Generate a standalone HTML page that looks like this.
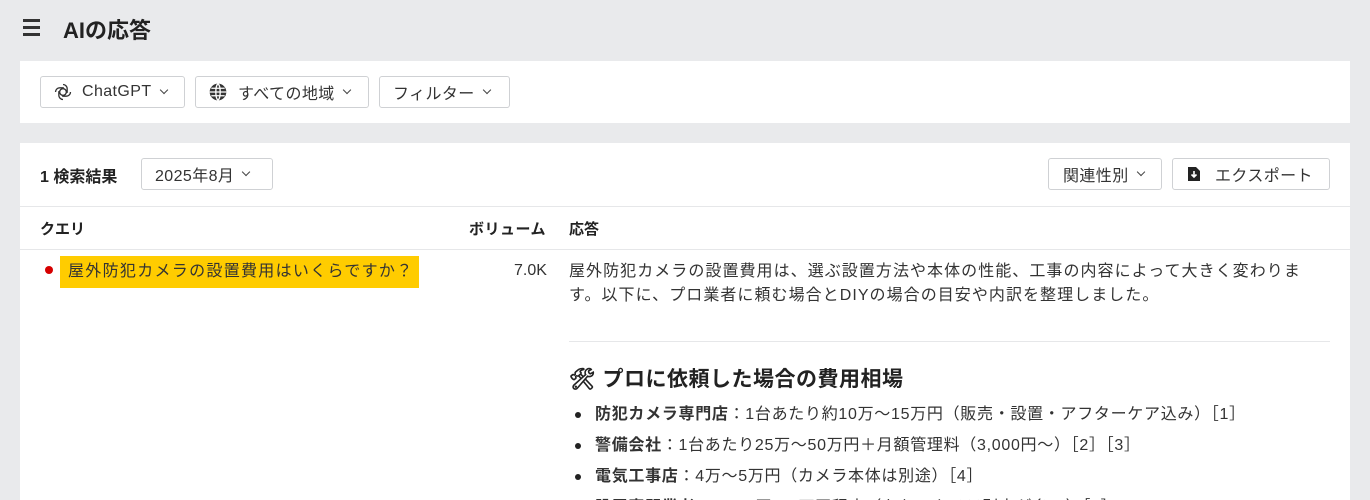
<!DOCTYPE html>
<html style="height:500px;overflow:hidden"><head><meta charset="utf-8"><style>
*{box-sizing:border-box;margin:0;padding:0}
body{width:1370px;height:500px;overflow:hidden;background:#e9eaec;font-family:"Liberation Sans","Noto Sans CJK JP",sans-serif;color:#222;position:relative}
.abs{position:absolute}
.btn{position:absolute;height:32px;border:1px solid #cfd1d4;border-radius:3px;background:#fff;font-size:16px;color:#333;display:flex;align-items:center;white-space:nowrap;letter-spacing:0.4px}
.chev{display:inline-block;width:6px;height:6px;border-right:1.5px solid #444;border-bottom:1.5px solid #444;transform:rotate(45deg);margin-left:9px;margin-top:-4px}
.card{position:absolute;left:20px;width:1330px;background:#fff;overflow:hidden}
li{list-style:none;position:relative;padding-left:26px;font-size:16px;height:31px;line-height:31px;letter-spacing:0.7px;white-space:nowrap}
li:before{content:"";position:absolute;left:6px;top:13px;width:6px;height:6px;border-radius:50%;background:#222}
.hb{position:absolute;left:23px;width:17px;height:3px;background:#333}
</style></head><body>
<div class="hb" style="top:19px"></div><div class="hb" style="top:26px"></div><div class="hb" style="top:33px"></div>
<div class="abs" style="left:63px;top:13px;font-size:22px;font-weight:bold;color:#222">AIの応答</div>

<div class="card" style="top:61px;height:62px">
<div class="btn" style="left:20px;top:15px;width:145px;padding-left:12px">
<svg width="20" height="20" viewBox="0 0 24 24" fill="none" stroke="#333" stroke-width="1.6"><circle cx="12" cy="12" r="4"/><path d="M12 3a5 5 0 0 1 5 5v5M21 12a5 5 0 0 1-5 5h-5M12 21a5 5 0 0 1-5-5v-5M3 12a5 5 0 0 1 5-5h5"/></svg>
<span style="margin-left:9px">ChatGPT</span><span class="chev"></span></div>
<div class="btn" style="left:175px;top:15px;width:174px;padding-left:12px">
<svg width="20" height="20" viewBox="0 0 24 24"><circle cx="12" cy="12" r="10" fill="#333"/><path d="M2 12h20M12 2c-3.5 3-3.5 17 0 20M12 2c3.5 3 3.5 17 0 20M4 7.5h16M4 16.5h16" stroke="#fff" stroke-width="1.6" fill="none"/></svg>
<span style="margin-left:10px">すべての地域</span><span class="chev"></span></div>
<div class="btn" style="left:359px;top:15px;width:131px;padding-left:13px"><span>フィルター</span><span class="chev"></span></div>
</div>

<div class="card" style="top:143px;height:357px">
<div class="abs" style="left:20px;top:20px;font-size:16px;font-weight:bold">1 検索結果</div>
<div class="btn" style="left:121px;top:15px;width:132px;padding-left:13px"><span>2025年8月</span><span class="chev"></span></div>
<div class="btn" style="left:1028px;top:15px;width:114px;padding-left:14px"><span>関連性別</span><span class="chev"></span></div>
<div class="btn" style="left:1152px;top:15px;width:158px;padding-left:14px">
<svg width="14" height="16" viewBox="0 0 14 16"><path d="M1 1h8l4 4v10H1z" fill="#222"/><path d="M7 5v6M4.5 8.5 7 11l2.5-2.5" stroke="#fff" stroke-width="1.6" fill="none"/></svg>
<span style="margin-left:14px">エクスポート</span></div>
<div class="abs" style="left:0;top:63px;width:1330px;border-top:1px solid #e6e7e9"></div>
<div class="abs" style="left:20px;top:75px;font-size:15px;font-weight:bold">クエリ</div>
<div class="abs" style="left:449px;top:75px;font-size:15px;font-weight:bold;letter-spacing:0.5px">ボリューム</div>
<div class="abs" style="left:549px;top:75px;font-size:15px;font-weight:bold">応答</div>
<div class="abs" style="left:0;top:106px;width:1330px;border-top:1px solid #e6e7e9"></div>
<div class="abs" style="left:25px;top:123px;width:8px;height:8px;border-radius:50%;background:#d60000"></div>
<div class="abs" style="left:40px;top:113px;width:359px;height:32px;background:#ffcc00;font-size:16px;line-height:32px;padding-left:8px;color:#333;letter-spacing:1.3px;white-space:nowrap">屋外防犯カメラの設置費用はいくらですか？</div>
<div class="abs" style="left:494px;top:119px;font-size:16px;color:#333">7.0K</div>
<div class="abs" style="left:549px;top:117px;width:770px;font-size:16px;line-height:24px;color:#333;letter-spacing:1.05px;white-space:nowrap">屋外防犯カメラの設置費用は、選ぶ設置方法や本体の性能、工事の内容によって大きく変わりま<br>す。以下に、プロ業者に頼む場合とDIYの場合の目安や内訳を整理しました。</div>
<div class="abs" style="left:549px;top:198px;width:761px;border-top:1px solid #e6e7e9"></div>
<div class="abs" style="left:549px;top:220px;font-size:21px;font-weight:bold;color:#222;letter-spacing:0.5px">🛠 プロに依頼した場合の費用相場</div>
<ul class="abs" style="left:549px;top:256px;width:760px;color:#333">
<li><b>防犯カメラ専門店</b>：1台あたり約10万〜15万円（販売・設置・アフターケア込み）［1］</li>
<li><b>警備会社</b>：1台あたり25万〜50万円＋月額管理料（3,000円〜）［2］［3］</li>
<li><b>電気工事店</b>：4万〜5万円（カメラ本体は別途）［4］</li>
<li><b>設置専門業者</b>：1,000円〜3万円程度（なお、カメラ別売が多い）［5］</li>
</ul>
</div>
</body></html>
